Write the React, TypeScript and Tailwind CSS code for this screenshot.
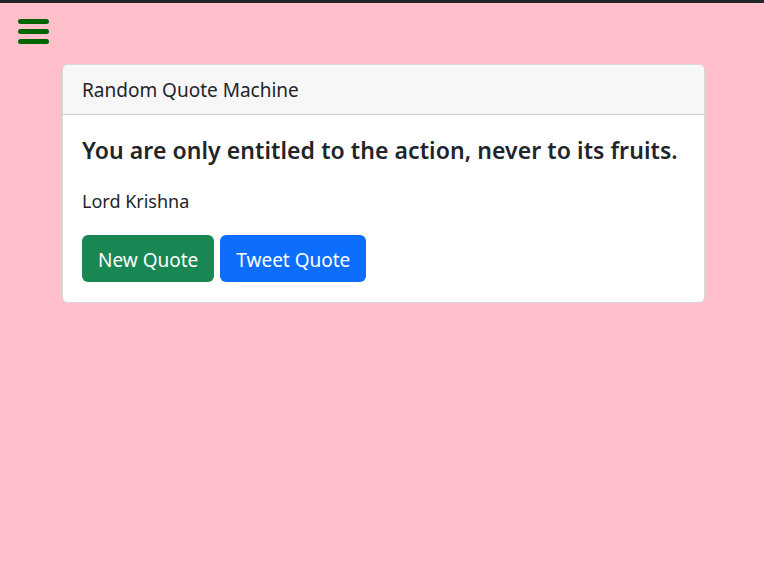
import React from "react";

export default function App() {
  return (
    <div
      className="min-h-[566px] w-full bg-[#ffc0cb] border-t-[3px] border-[#212529]"
      style={{ fontFamily: '"Noto Sans", "Open Sans", sans-serif' }}
    >
      <div className="pl-[18px] pt-[15px] h-[61px]">
        <svg width="31" height="27" viewBox="0 0 31 27">
          <line x1="2.5" y1="3.5" x2="28.5" y2="3.5" stroke="#006400" strokeWidth="5" strokeLinecap="round" />
          <line x1="2.5" y1="13.5" x2="28.5" y2="13.5" stroke="#006400" strokeWidth="5" strokeLinecap="round" />
          <line x1="2.5" y1="23.5" x2="28.5" y2="23.5" stroke="#006400" strokeWidth="5" strokeLinecap="round" />
        </svg>
      </div>
      <div className="ml-[62px] w-[643px] bg-white rounded-[6px] border border-[#d9d9d9] overflow-hidden">
        <div className="h-[50px] bg-[#f7f7f7] border-b border-[#cfcfcf] px-[19px] pt-[2px] flex items-center text-[19px] text-[#212529]">
          Random Quote Machine
        </div>
        <div className="px-[19px] pt-[17px] pb-[20px] text-[#212529]">
          <div className="text-[23px] font-semibold leading-[36px] tracking-[0.07px]">
            You are only entitled to the action, never to its fruits.
          </div>
          <div className="mt-[19px] text-[18px] leading-[28px]">Lord Krishna</div>
          <div className="mt-[20px] flex gap-[6px]">
            <button className="h-[47px] px-[16px] pt-[3px] rounded-[6px] bg-[#198754] text-white text-[19px]">
              New Quote
            </button>
            <button className="h-[47px] px-[16px] pt-[3px] rounded-[6px] bg-[#0d6efd] text-white text-[19px]">
              Tweet Quote
            </button>
          </div>
        </div>
      </div>
    </div>
  );
}
